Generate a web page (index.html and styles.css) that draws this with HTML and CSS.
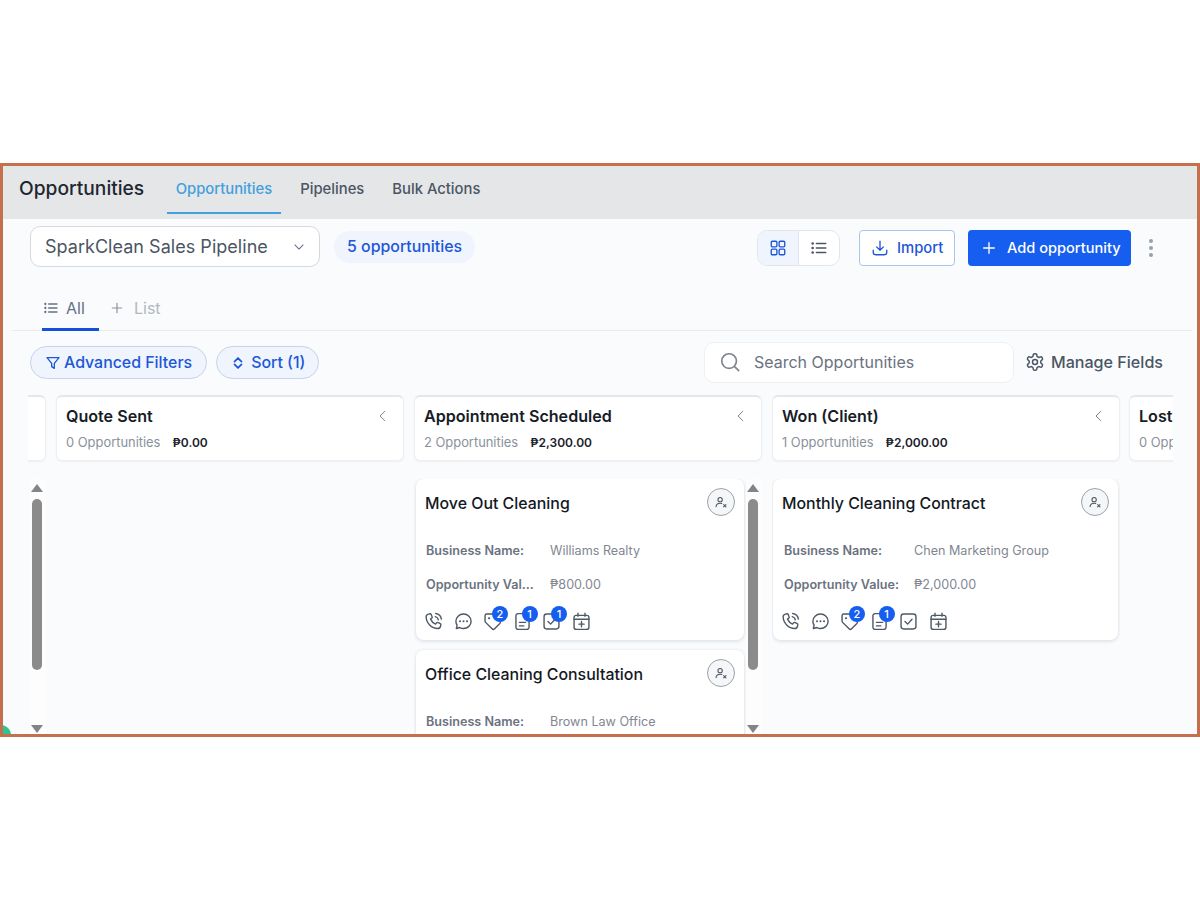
FILE: index.html
```html
<!DOCTYPE html>
<html lang="en">
<head>
<meta charset="utf-8">
<title>Opportunities</title>
<link rel="stylesheet" href="styles.css">
</head>
<body>
<svg class="defs" width="0" height="0" aria-hidden="true">
  <symbol id="i-phone" viewBox="0 0 24 24"><path d="M6.200 3.600 8 3.200c.5-.1 1 .2 1.200.6l1.300 3c.2.400.1.900-.3 1.200L8.600 9.300c1.100 2.500 3.200 4.600 5.700 5.700l1.300-1.600c.3-.4.800-.5 1.200-.3l3 1.300c.5.200.7.700.6 1.200l-.4 1.800c-.3 1.500-1.600 2.600-3.100 2.600C9.900 20 3.600 13.700 3.600 6.700c0-1.500 1.100-2.800 2.600-3.100Z"/><path d="M14 6.500c1.800.4 3.100 1.700 3.500 3.500M14.500 2.800c3.400.5 6 3.100 6.500 6.500"/></symbol>
  <symbol id="i-chat" viewBox="0 0 24 24"><path d="M12 3.500c-4.900 0-8.700 3.600-8.700 8.200 0 1.700.5 3.200 1.400 4.500l-.9 3.800 4-1.100c1.300.7 2.700 1.100 4.200 1.100 4.900 0 8.700-3.700 8.700-8.300S16.900 3.500 12 3.500Z"/><path d="M8 11.800h.1M12 11.800h.1M16 11.800h.1" stroke-width="2.200"/></symbol>
  <symbol id="i-tag" viewBox="0 0 24 24"><path d="M3.500 5.500v6c0 .6.200 1.100.6 1.500l7.400 7.400c.8.800 2.100.8 2.900 0l6-6c.8-.8.800-2.100 0-2.900L13 4.100c-.4-.4-.9-.6-1.500-.6h-6c-1.100 0-2 .9-2 2Z"/><path d="M8 8.200h.1" stroke-width="2.400"/></symbol>
  <symbol id="i-note" viewBox="0 0 24 24"><path d="M13.500 3H7a2.500 2.500 0 0 0-2.500 2.500v13A2.500 2.500 0 0 0 7 21h10a2.500 2.500 0 0 0 2.500-2.500V9l-6-6Z"/><path d="M8.500 13h7M8.500 17h5"/></symbol>
  <symbol id="i-task" viewBox="0 0 24 24"><rect x="3.500" y="3.500" width="17" height="17" rx="3"/><path d="m8 12 3 3 5-5.500"/></symbol>
  <symbol id="i-cal" viewBox="0 0 24 24"><rect x="3.500" y="5" width="17" height="16" rx="2.500"/><path d="M3.500 9.500h17M8 2.500V6M16 2.500V6M12 12v6M9 15h6"/></symbol>
  <symbol id="i-user" viewBox="0 0 24 24"><circle cx="10.500" cy="8" r="3.700"/><path d="M3.500 20c.3-3.600 3-6 7-6 1 0 2 .2 2.800.5"/><path d="m16.500 16.500 4 4M20.500 16.500l-4 4"/></symbol>
  <symbol id="i-list" viewBox="0 0 24 24"><path d="M8.500 6H21M8.500 12H21M8.500 18H21" stroke-width="2"/><path d="M3.500 6h.1M3.500 12h.1M3.500 18h.1" stroke-width="3.400"/></symbol>
  <symbol id="i-plus" viewBox="0 0 24 24"><path d="M12 4v16M4 12h16" stroke-width="2"/></symbol>
</svg>

<main class="frame">
  <header class="topbar">
    <h1 class="page-title">Opportunities</h1>
    <nav class="top-tabs">
      <a class="top-tab is-active">Opportunities</a>
      <a class="top-tab">Pipelines</a>
      <a class="top-tab">Bulk Actions</a>
    </nav>
  </header>

  <section class="toolbar">
    <div class="pipeline-select">
      <span>SparkClean Sales Pipeline</span>
      <svg class="chev" viewBox="0 0 24 24"><path d="m5 8.500 7 7 7-7"/></svg>
    </div>
    <span class="count-chip">5 opportunities</span>
    <div class="toolbar-right">
      <div class="view-toggle">
        <span class="view-btn is-active">
          <svg class="ic-18" viewBox="0 0 24 24"><rect x="3" y="3" width="7.500" height="7.500" rx="1.500"/><rect x="13.500" y="3" width="7.500" height="7.500" rx="1.500"/><rect x="3" y="13.500" width="7.500" height="7.500" rx="1.500"/><rect x="13.500" y="13.500" width="7.500" height="7.500" rx="1.500"/></svg>
        </span>
        <span class="view-btn">
          <svg class="ic-18"><use href="#i-list"/></svg>
        </span>
      </div>
      <button class="btn-outline">
        <svg class="ic-18" viewBox="0 0 24 24"><path d="M12 3v12M7.500 10.500 12 15l4.500-4.500M3 15v2.500A3.500 3.500 0 0 0 6.500 21h11a3.500 3.500 0 0 0 3.500-3.500V15"/></svg>
        Import
      </button>
      <button class="btn-primary">
        <svg class="ic-16"><use href="#i-plus"/></svg>
        Add opportunity
      </button>
      <span class="kebab"><i></i><i></i><i></i></span>
    </div>
  </section>

  <section class="list-tabs">
    <div class="list-tab is-active">
      <svg class="ic-16"><use href="#i-list"/></svg>
      <span>All</span>
    </div>
    <div class="list-tab is-add">
      <svg class="ic-14"><use href="#i-plus"/></svg>
      <span>List</span>
    </div>
  </section>

  <section class="filters">
    <button class="pill">
      <svg class="ic-16" viewBox="0 0 24 24"><path d="M3 4h18l-7 8.500V20l-4-2.500v-5L3 4Z" stroke-width="2"/></svg>
      Advanced Filters
    </button>
    <button class="pill pill-sort">
      <svg class="ic-14" viewBox="0 0 24 24"><path d="m6 9.500 6-6 6 6M6 14.500l6 6 6-6" stroke-width="3"/></svg>
      Sort (1)
    </button>
    <div class="filters-right">
      <div class="search">
        <svg class="ic-22" viewBox="0 0 24 24"><circle cx="11" cy="11" r="8"/><path d="m17 17 4.500 4.500"/></svg>
        <span>Search Opportunities</span>
      </div>
      <div class="manage">
        <svg class="ic-20" viewBox="0 0 24 24"><path d="M12.220 2h-.44a2 2 0 0 0-2 2v.18a2 2 0 0 1-1 1.730l-.43.25a2 2 0 0 1-2 0l-.15-.08a2 2 0 0 0-2.730.73l-.22.38a2 2 0 0 0 .73 2.730l.15.1a2 2 0 0 1 1 1.720v.51a2 2 0 0 1-1 1.740l-.15.09a2 2 0 0 0-.73 2.730l.22.38a2 2 0 0 0 2.730.73l.15-.08a2 2 0 0 1 2 0l.43.25a2 2 0 0 1 1 1.730V20a2 2 0 0 0 2 2h.44a2 2 0 0 0 2-2v-.18a2 2 0 0 1 1-1.730l.43-.25a2 2 0 0 1 2 0l.15.08a2 2 0 0 0 2.730-.73l.22-.39a2 2 0 0 0-.73-2.730l-.15-.08a2 2 0 0 1-1-1.740v-.5a2 2 0 0 1 1-1.740l.15-.09a2 2 0 0 0 .73-2.730l-.22-.38a2 2 0 0 0-2.730-.73l-.15.08a2 2 0 0 1-2 0l-.43-.25a2 2 0 0 1-1-1.730V4a2 2 0 0 0-2-2z"/><circle cx="12" cy="12" r="3"/></svg>
        <span>Manage Fields</span>
      </div>
    </div>
  </section>

  <section class="board">
    <div class="column is-clipped">
      <div class="col-head"></div>
      <div class="col-body">
        <div class="cards"></div>
        <div class="scrollbar"><b class="up"></b><b class="thumb"></b><b class="down"></b></div>
      </div>
    </div>

    <div class="column">
      <div class="col-head">
        <div class="col-title"><strong>Quote Sent</strong><svg class="ic-14 back" viewBox="0 0 24 24"><path d="m15 4-8 8 8 8"/></svg></div>
        <div class="col-meta"><span>0 Opportunities</span><b>₱0.00</b></div>
      </div>
    </div>

    <div class="column">
      <div class="col-head">
        <div class="col-title"><strong>Appointment Scheduled</strong><svg class="ic-14 back" viewBox="0 0 24 24"><path d="m15 4-8 8 8 8"/></svg></div>
        <div class="col-meta"><span>2 Opportunities</span><b>₱2,300.00</b></div>
      </div>
      <div class="col-body">
        <div class="cards">
          <article class="card">
            <div class="card-top"><h2>Move Out Cleaning</h2><span class="avatar"><svg class="ic-14"><use href="#i-user"/></svg></span></div>
            <dl class="fields">
              <dt>Business Name:</dt><dd>Williams Realty</dd>
              <dt>Opportunity Val...</dt><dd>₱800.00</dd>
            </dl>
            <div class="actions">
              <span class="act"><svg><use href="#i-phone"/></svg></span>
              <span class="act"><svg><use href="#i-chat"/></svg></span>
              <span class="act"><svg><use href="#i-tag"/></svg><em>2</em></span>
              <span class="act"><svg><use href="#i-note"/></svg><em>1</em></span>
              <span class="act"><svg><use href="#i-task"/></svg><em>1</em></span>
              <span class="act"><svg><use href="#i-cal"/></svg></span>
            </div>
          </article>
          <article class="card">
            <div class="card-top"><h2>Office Cleaning Consultation</h2><span class="avatar"><svg class="ic-14"><use href="#i-user"/></svg></span></div>
            <dl class="fields">
              <dt>Business Name:</dt><dd>Brown Law Office</dd>
            </dl>
          </article>
        </div>
        <div class="scrollbar"><b class="up"></b><b class="thumb"></b><b class="down"></b></div>
      </div>
    </div>

    <div class="column">
      <div class="col-head">
        <div class="col-title"><strong>Won (Client)</strong><svg class="ic-14 back" viewBox="0 0 24 24"><path d="m15 4-8 8 8 8"/></svg></div>
        <div class="col-meta"><span>1 Opportunities</span><b>₱2,000.00</b></div>
      </div>
      <div class="col-body">
        <div class="cards">
          <article class="card is-wide">
            <div class="card-top"><h2>Monthly Cleaning Contract</h2><span class="avatar"><svg class="ic-14"><use href="#i-user"/></svg></span></div>
            <dl class="fields">
              <dt>Business Name:</dt><dd>Chen Marketing Group</dd>
              <dt>Opportunity Value:</dt><dd>₱2,000.00</dd>
            </dl>
            <div class="actions">
              <span class="act"><svg><use href="#i-phone"/></svg></span>
              <span class="act"><svg><use href="#i-chat"/></svg></span>
              <span class="act"><svg><use href="#i-tag"/></svg><em>2</em></span>
              <span class="act"><svg><use href="#i-note"/></svg><em>1</em></span>
              <span class="act"><svg><use href="#i-task"/></svg></span>
              <span class="act"><svg><use href="#i-cal"/></svg></span>
            </div>
          </article>
        </div>
      </div>
    </div>

    <div class="column is-last">
      <div class="col-head">
        <div class="col-title"><strong>Lost</strong></div>
        <div class="col-meta"><span>0 Opportunities</span></div>
      </div>
    </div>
  </section>

  <span class="status-dot"></span>
</main>
</body>
</html>
```
FILE: styles.css
```css
* { box-sizing: border-box; }
html, body { margin: 0; background: #fff; }
body {
  padding-top: 163px;
  height: 900px;
  overflow: hidden;
  font-family: Inter, "Liberation Sans", sans-serif;
  color: #1f2937;
}
.defs { position: absolute; }
svg {
  fill: none;
  stroke: currentColor;
  stroke-width: 1.800;
  stroke-linecap: round;
  stroke-linejoin: round;
  flex: none;
}
.ic-14 { width: 14px; height: 14px; }
.ic-16 { width: 16px; height: 16px; }
.ic-18 { width: 18px; height: 18px; }
.ic-20 { width: 20px; height: 20px; }
.ic-22 { width: 22px; height: 22px; }
button { font: inherit; cursor: pointer; }

.frame {
  position: relative;
  display: flex;
  flex-direction: column;
  width: 1200px;
  height: 574px;
  border: 3px solid #c66f4c;
  background: #f9fbfd;
  overflow: hidden;
}

/* top bar */
.topbar {
  display: flex;
  align-items: stretch;
  height: 53px;
  flex: none;
  padding-left: 16px;
  background: #e4e6e8;
}
.page-title {
  margin: 0 22.500px 0 0;
  padding-top: 8px;
  font-size: 19.200px;
  line-height: 28px;
  font-weight: 500;
  color: #1f2731;
}
.top-tabs { display: flex; gap: 1px; }
.top-tab {
  padding: 11px 9px 0;
  margin-right: 9px;
  font-size: 14.800px;
  line-height: 24px;
  font-weight: 500;
  color: #4b5563;
}
.top-tab.is-active {
  color: #42a0dc;
  border-bottom: 2px solid #42a0dc;
  height: 48px;
}

/* toolbar */
.toolbar {
  display: flex;
  align-items: center;
  flex: none;
  height: 41px;
  margin-top: 7px;
  padding: 0 26px 0 27px;
}
.pipeline-select {
  display: flex;
  align-items: center;
  justify-content: space-between;
  width: 290px;
  height: 41px;
  padding: 0 13px 0 14px;
  background: #fff;
  border: 1px solid #d5d9df;
  border-radius: 10px;
  font-size: 18px;
  letter-spacing: .03px;
  color: #4b5563;
}
.chev { width: 14px; height: 14px; color: #667085; }
.count-chip {
  display: flex;
  align-items: center;
  height: 32px;
  margin-left: 14px;
  padding: 0 13px;
  border-radius: 16px;
  background: #eff4fd;
  font-size: 15.900px;
  font-weight: 500;
  color: #1d57d8;
}
.toolbar-right {
  display: flex;
  align-items: center;
  margin-left: auto;
  padding: 3px 18px 0 0;
}
.view-toggle {
  display: flex;
  width: 83px;
  height: 36px;
  background: #fff;
  border: 1px solid #e2e6ec;
  border-radius: 10px;
  overflow: hidden;
}
.view-btn {
  display: flex;
  align-items: center;
  justify-content: center;
  flex: 1;
  color: #4b5563;
}
.view-btn.is-active {
  background: #eff4fd;
  border-right: 1px solid #e2e6ec;
  color: #1d57d8;
}
.btn-outline {
  display: flex;
  align-items: center;
  gap: 8px;
  width: 96px;
  height: 36px;
  margin-left: 19px;
  padding: 0 0 0 11px;
  background: #fff;
  border: 1px solid #a9c4f3;
  border-radius: 4px;
  font-size: 14.800px;
  font-weight: 500;
  color: #1d57d8;
}
.btn-primary {
  display: flex;
  align-items: center;
  gap: 10px;
  width: 163px;
  height: 36px;
  margin-left: 13px;
  padding: 0 0 0 13px;
  background: #155eef;
  border: 0;
  border-radius: 4px;
  font-size: 14.600px;
  font-weight: 500;
  color: #fff;
}
.kebab {
  display: flex;
  flex-direction: column;
  gap: 3px;
  margin-left: 18px;
}
.kebab i {
  width: 4px;
  height: 4px;
  border-radius: 50%;
  background: #98a0aa;
}

/* list tabs */
.list-tabs {
  display: flex;
  flex: none;
  height: 64px;
  margin: 0 5px 0 9px;
  padding-left: 30px;
  border-bottom: 1px solid #e8ebef;
}
.list-tab {
  display: flex;
  align-items: center;
  gap: 7px;
  height: 64px;
  padding-top: 17px;
  font-size: 16px;
  color: #667085;
}
.list-tab.is-active {
  width: 57px;
  padding: 21px 0 0 1px;
  border-bottom: 3px solid #1450d8;
}
.list-tab.is-add {
  gap: 10px;
  margin-left: 11px;
  color: #b3b8c0;
}
.list-tab.is-add svg { color: #8b929c; }

/* filters */
.filters {
  display: flex;
  align-items: center;
  flex: none;
  height: 41px;
  margin-top: 11px;
  padding-left: 27px;
}
.pill {
  display: flex;
  align-items: center;
  gap: 3px;
  height: 33px;
  margin-right: 9px;
  padding: 0 14px;
  background: #eff4fd;
  border: 1px solid #c6d3ec;
  border-radius: 17px;
  font-size: 15.900px;
  font-weight: 500;
  color: #1d57d8;
}
.pill-sort { gap: 6px; padding: 0 13px 0 14px; }
.filters-right {
  display: flex;
  align-items: center;
  margin-left: auto;
  padding-right: 34px;
}
.search {
  display: flex;
  align-items: center;
  gap: 13px;
  width: 310px;
  height: 41px;
  padding: 0 0 1px 14px;
  background: #fff;
  border: 1px solid #eef0f3;
  border-radius: 10px;
  font-size: 16px;
  color: #6b7280;
}
.search svg { color: #7d848d; }
.manage {
  display: flex;
  align-items: center;
  gap: 6px;
  margin-left: 11px;
  padding-bottom: 2px;
  font-size: 16.100px;
  font-weight: 500;
  color: #4b5563;
}

/* board */
.board {
  display: flex;
  flex: 1;
  min-height: 0;
  gap: 10px;
  margin: 12px 24px 0 25px;
  overflow: hidden;
}
.column {
  display: flex;
  flex-direction: column;
  flex: none;
  width: 348px;
  height: 100%;
}
.column.is-clipped { margin-left: -330px; }
.column.is-last { margin-left: -1px; }
.col-head {
  flex: none;
  height: 66px;
  padding: 9px 9px 0;
  background: #fff;
  border: 1px solid #edf0f3;
  border-top: 2px solid #e4e7eb;
  border-radius: 6px;
  box-shadow: 0 1px 2px rgba(16, 24, 40, .05);
}
.col-title {
  display: flex;
  align-items: center;
  justify-content: space-between;
  height: 20px;
  font-size: 16.100px;
  color: #171c26;
}
.col-title strong { font-weight: 600; }
.back { color: #667085; margin-right: 4px; stroke-width: 1.500; }
.col-meta {
  display: flex;
  align-items: baseline;
  gap: 12px;
  margin-top: 8px;
  font-size: 12.900px;
  line-height: 18px;
  color: #8a919b;
  white-space: nowrap;
}
.col-meta b { font-weight: 600; color: #1b212b; font-size: 12px; }

.col-body {
  display: flex;
  flex: 1;
  min-height: 0;
  margin-top: 18px;
}
.cards {
  flex: 1;
  min-width: 0;
  display: flex;
  flex-direction: column;
  gap: 10px;
  padding: 0 2px;
  overflow: hidden;
}
.scrollbar {
  flex: none;
  display: flex;
  flex-direction: column;
  align-items: center;
  width: 16px;
  padding-right: 2px;
  background: #fdfdfe;
}
.scrollbar .up, .scrollbar .down {
  flex: none;
  width: 0;
  height: 0;
  border-left: 6px solid transparent;
  border-right: 6px solid transparent;
}
.scrollbar .up { margin-top: 5px; border-bottom: 8px solid #80858a; }
.scrollbar .down { margin-top: 55px; border-top: 8px solid #80858a; }
.scrollbar .thumb {
  flex: none;
  width: 10px;
  height: 171px;
  margin-top: 7px;
  border-radius: 5px;
  background: #8b8b8b;
}

/* cards */
.card {
  flex: none;
  height: 161px;
  padding: 0 9px;
  background: #fff;
  border-radius: 8px;
  box-shadow: 0 1px 4px rgba(16, 24, 40, .14);
}
.card.is-wide { margin-left: -1px; }
.card-top {
  display: flex;
  align-items: flex-start;
  justify-content: space-between;
  height: 55px;
  padding-top: 9px;
}
.card-top h2 {
  margin: 4px 0 0;
  font-size: 15.900px;
  line-height: 24px;
  font-weight: 500;
  color: #14181f;
}
.avatar {
  display: flex;
  align-items: center;
  justify-content: center;
  width: 28px;
  height: 28px;
  background: #f5f6f7;
  border: 1px solid #9aa1aa;
  border-radius: 50%;
  color: #4b5563;
}
.fields {
  display: grid;
  grid-template-columns: 124px 1fr;
  row-gap: 16px;
  margin: 8px 0 0 1px;
  font-size: 12.600px;
  line-height: 18px;
}
.is-wide .fields { grid-template-columns: 130px 1fr; margin-left: 2px; }
.fields dt {
  font-weight: 600;
  color: #6b7280;
  white-space: nowrap;
}
.fields dd {
  margin: 0;
  font-size: 12.600px;
  color: #7f8791;
}
.actions {
  display: flex;
  margin: 17px 0 0 -2px;
}
.act {
  position: relative;
  display: flex;
  width: 29.500px;
  height: 21px;
  color: #4f5865;
}
.act svg { width: 21px; height: 21px; stroke-width: 1.600; }
.act em {
  position: absolute;
  top: -5px;
  left: 10px;
  display: flex;
  align-items: center;
  justify-content: center;
  width: 16px;
  height: 16px;
  border-radius: 50%;
  background: #155eef;
  font-style: normal;
  font-size: 11px;
  font-weight: 500;
  color: #fff;
}

.status-dot {
  position: absolute;
  left: -12px;
  bottom: -11px;
  width: 20px;
  height: 20px;
  border-radius: 50%;
  background: #2ec490;
}
```
